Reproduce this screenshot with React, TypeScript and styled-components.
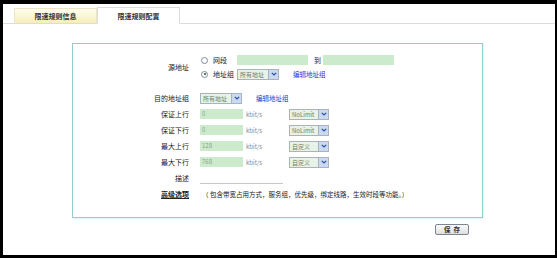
import React from 'react'
import styled, { createGlobalStyle } from 'styled-components'

const GlobalStyle = createGlobalStyle`
  html, body {
    margin: 0;
    padding: 0;
    background: #000;
  }
  body {
    font-family: "Noto Sans CJK SC", "Liberation Sans", sans-serif;
    color: #333;
  }
`

const Frame = styled.div`
  width: 557px;
  height: 258px;
  box-sizing: border-box;
  padding: 4px 2px 3px 3px;
  background: #000;
`

const Page = styled.div`
  height: 100%;
  background: #fff;
  display: flex;
  flex-direction: column;
`

const TabBar = styled.div`
  margin-top: 3px;
  padding-left: 11px;
  height: 16px;
  display: flex;
  align-items: flex-end;
  border-bottom: 1px solid #dcdcdc;
`

const Tab = styled.div<{ active?: boolean }>`
  width: 83px;
  height: ${p => (p.active ? '17px' : '15px')};
  margin-bottom: ${p => (p.active ? '-1px' : '0')};
  box-sizing: border-box;
  display: flex;
  align-items: center;
  justify-content: center;
  font-size: 7px;
  font-weight: 700;
  color: #333;
  background: ${p => (p.active ? '#fff' : 'linear-gradient(#fffdf0, #f6efb8)')};
  border: 1px solid ${p => (p.active ? '#dcdcdc' : '#ece6c4')};
  border-bottom: ${p => (p.active ? '1px solid #fff' : 'none')};
`

const Panel = styled.div`
  margin: 19px 0 0 69px;
  width: 411px;
  height: 175px;
  box-sizing: border-box;
  border: 1px solid #93cccc;
  box-shadow: 1px 1px 2px rgba(150, 190, 190, 0.25);
  padding-top: 9px;
  display: grid;
  grid-template-columns: 116px 1fr;
  grid-template-rows: 37px;
  grid-auto-rows: 16px;
  column-gap: 11px;
  font-size: 7px;
`

const Label = styled.div<{ bold?: boolean; gapBelow?: number }>`
  display: flex;
  align-items: center;
  justify-content: flex-end;
  padding-bottom: ${p => p.gapBelow || 0}px;
  font-weight: ${p => (p.bold ? 700 : 400)};
  text-decoration: ${p => (p.bold ? 'underline' : 'none')};
  color: #222;
`

const SourceBlock = styled.div`
  display: flex;
  flex-direction: column;
`

const Line = styled.div<{ h?: number }>`
  height: ${p => p.h || 16}px;
  display: flex;
  align-items: center;
`

const RadioOpt = styled.label`
  width: 36px;
  display: flex;
  align-items: center;
  gap: 5px;
  margin-left: 1px;
  color: #222;
`

const Radio = styled.span<{ checked?: boolean }>`
  width: 5px;
  height: 5px;
  border-radius: 50%;
  border: 1px solid #7a8aa0;
  background: #fff;
  position: relative;
  &::after {
    content: '';
    display: ${p => (p.checked ? 'block' : 'none')};
    position: absolute;
    left: 1.5px;
    top: 1.5px;
    width: 2px;
    height: 2px;
    border-radius: 50%;
    background: #2a4a20;
  }
`

const GreenInput = styled.div<{ w: number }>`
  width: ${p => p.w}px;
  height: 10px;
  box-sizing: border-box;
  background: #ccebcc;
  color: #8fa08f;
  font-size: 6px;
  line-height: 10px;
  padding-left: 2px;
`

const Between = styled.span`
  margin: 0 2px 0 6px;
  color: #222;
`

const Select = styled.div<{ w: number }>`
  width: ${p => p.w}px;
  height: 11px;
  box-sizing: border-box;
  border: 1px solid #a9b3bf;
  display: flex;
  align-items: stretch;
  background: #e6f3e6;
  color: #6f7f6f;
  font-size: 6px;
`

const SelectText = styled.span`
  flex: 1;
  line-height: 9px;
  padding-left: 2px;
  white-space: nowrap;
  overflow: hidden;
`

const Arrow = styled.span`
  width: 9px;
  background: #c9d9f1;
  border-left: 1px solid #a9b3bf;
  display: flex;
  align-items: center;
  justify-content: center;
`

const Link = styled.span`
  margin-left: 14px;
  color: #2336d8;
  font-size: 6.5px;
`

const Unit = styled.span`
  width: 43px;
  margin-left: 3px;
  color: #888;
  font-size: 6px;
`

const Underline = styled.div`
  width: 83px;
  height: 11px;
  border-bottom: 1px solid #c8c8c8;
`

const Hint = styled.span`
  margin-left: 2px;
  font-size: 6.5px;
  color: #222;
`

const Footer = styled.div`
  width: 411px;
  margin: 6px 0 0 69px;
  display: flex;
  justify-content: flex-end;
  padding-right: 14px;
  box-sizing: border-box;
`

const SaveButton = styled.button`
  width: 34px;
  height: 11px;
  padding: 0;
  border: 1px solid #7d8590;
  border-radius: 2px;
  background: linear-gradient(#fbfbfb, #dedede);
  font-family: "Noto Sans CJK SC", sans-serif;
  font-size: 6.5px;
  font-weight: 700;
  color: #333;
  line-height: 9px;
  letter-spacing: 3px;
  text-indent: 3px;
`

const Chevron = () => (
  <svg width="6" height="4" viewBox="0 0 6 4">
    <path d="M0.8 0.8 L3 3 L5.2 0.8" fill="none" stroke="#2d4fa8" strokeWidth="1.2" />
  </svg>
)

const DropDown = ({ w, value }: { w: number; value: string }) => (
  <Select w={w}>
    <SelectText>{value}</SelectText>
    <Arrow>
      <Chevron />
    </Arrow>
  </Select>
)

const rates = [
  { label: '保证上行', value: '0', mode: 'NoLimit' },
  { label: '保证下行', value: '0', mode: 'NoLimit' },
  { label: '最大上行', value: '128', mode: '自定义' },
  { label: '最大下行', value: '768', mode: '自定义' },
]

export default function App() {
  return (
    <>
      <GlobalStyle />
      <Frame>
        <Page>
          <TabBar>
            <Tab>限速规则信息</Tab>
            <Tab active>限速规则配置</Tab>
          </TabBar>

          <Panel>
            <Label gapBelow={9}>源地址</Label>
            <SourceBlock>
              <Line h={14}>
                <RadioOpt>
                  <Radio />
                  网段
                </RadioOpt>
                <GreenInput w={71} />
                <Between>到</Between>
                <GreenInput w={71} />
              </Line>
              <Line h={14}>
                <RadioOpt>
                  <Radio checked />
                  地址组
                </RadioOpt>
                <DropDown w={42} value="所有地址" />
                <Link>编辑地址组</Link>
              </Line>
            </SourceBlock>

            <Label>目的地址组</Label>
            <Line>
              <DropDown w={42} value="所有地址" />
              <Link>编辑地址组</Link>
            </Line>

            {rates.map(r => (
              <React.Fragment key={r.label}>
                <Label>{r.label}</Label>
                <Line>
                  <GreenInput w={43}>{r.value}</GreenInput>
                  <Unit>kbit/s</Unit>
                  <DropDown w={40} value={r.mode} />
                </Line>
              </React.Fragment>
            ))}

            <Label>描述</Label>
            <Line>
              <Underline />
            </Line>

            <Label bold>高级选项</Label>
            <Line>
              <Hint>（ 包含带宽占用方式，服务组，优先级，绑定线路，生效时段等功能。）</Hint>
            </Line>
          </Panel>

          <Footer>
            <SaveButton>保存</SaveButton>
          </Footer>
        </Page>
      </Frame>
    </>
  )
}
